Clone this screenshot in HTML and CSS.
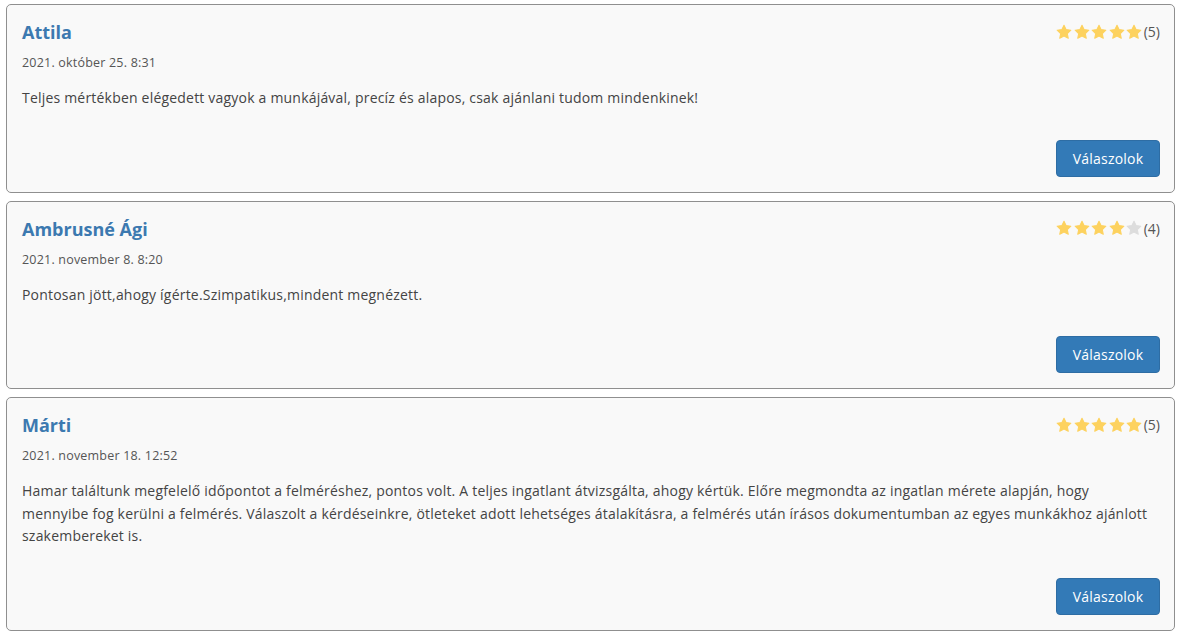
FILE: index.html
```html
<!DOCTYPE html>
<html lang="hu">
<head>
    <meta charset="UTF-8">
    <meta name="viewport" content="width=device-width, initial-scale=1.0">
    <title>Értékelések</title>
    <link rel="stylesheet" href="styles.css">
</head>
<body>
<svg width="0" height="0" class="defs">
    <defs>
        <symbol id="star" viewBox="0 0 24 24">
            <path d="M12 1.8l3.1 6.6 7.2.9-5.3 5 1.4 7.1L12 17.9l-6.4 3.5 1.4-7.1-5.3-5 7.2-.9z" stroke-linejoin="round" stroke-width="1.6"/>
        </symbol>
    </defs>
</svg>
<div class="reviews">
    <div class="review">
        <div class="review-head">
            <h3 class="review-name">Attila</h3>
            <div class="rating">
                <svg class="star on"><use href="#star"/></svg>
                <svg class="star on"><use href="#star"/></svg>
                <svg class="star on"><use href="#star"/></svg>
                <svg class="star on"><use href="#star"/></svg>
                <svg class="star on"><use href="#star"/></svg>
                <span class="count">(5)</span>
            </div>
        </div>
        <div class="review-date">2021. október 25. 8:31</div>
        <p class="review-text">Teljes mértékben elégedett vagyok a munkájával, precíz és alapos, csak ajánlani tudom mindenkinek!</p>
        <div class="review-actions">
            <button class="btn-reply">Válaszolok</button>
        </div>
    </div>

    <div class="review">
        <div class="review-head">
            <h3 class="review-name">Ambrusné Ági</h3>
            <div class="rating">
                <svg class="star on"><use href="#star"/></svg>
                <svg class="star on"><use href="#star"/></svg>
                <svg class="star on"><use href="#star"/></svg>
                <svg class="star on"><use href="#star"/></svg>
                <svg class="star"><use href="#star"/></svg>
                <span class="count">(4)</span>
            </div>
        </div>
        <div class="review-date">2021. november 8. 8:20</div>
        <p class="review-text">Pontosan jött,ahogy ígérte.Szimpatikus,mindent megnézett.</p>
        <div class="review-actions">
            <button class="btn-reply">Válaszolok</button>
        </div>
    </div>

    <div class="review">
        <div class="review-head">
            <h3 class="review-name">Márti</h3>
            <div class="rating">
                <svg class="star on"><use href="#star"/></svg>
                <svg class="star on"><use href="#star"/></svg>
                <svg class="star on"><use href="#star"/></svg>
                <svg class="star on"><use href="#star"/></svg>
                <svg class="star on"><use href="#star"/></svg>
                <span class="count">(5)</span>
            </div>
        </div>
        <div class="review-date">2021. november 18. 12:52</div>
        <p class="review-text">Hamar találtunk megfelelő időpontot a felméréshez, pontos volt. A teljes ingatlant átvizsgálta, ahogy kértük. Előre megmondta az ingatlan mérete alapján, hogy mennyibe fog kerülni a felmérés. Válaszolt a kérdéseinkre, ötleteket adott lehetséges átalakításra, a felmérés után írásos dokumentumban az egyes munkákhoz ajánlott szakembereket is.</p>
        <div class="review-actions">
            <button class="btn-reply">Válaszolok</button>
        </div>
    </div>
</div>
</body>
</html>
```

FILE: styles.css
```css
/* Global */
body {
    font-family: 'Open Sans', 'Noto Sans', sans-serif;
    margin: 0;
    padding: 4px 5px 0 6px;
    background-color: #fff;
    color: #444;
}

.defs {
    position: absolute;
}

.reviews {
    display: flex;
    flex-direction: column;
    gap: 8px;
}

/* Review card */
.review {
    background-color: #f9f9f9;
    border: 1px solid #8f8f8f;
    border-radius: 5px;
    padding: 15px 14px 15px 15px;
}

.review-head {
    display: flex;
    justify-content: space-between;
    align-items: flex-start;
}

.review-name {
    margin: 0;
    font-size: 18px;
    line-height: 24px;
    font-weight: 700;
    color: #3c79b0;
}

.rating {
    display: flex;
    align-items: center;
    gap: 1.5px;
    font-size: 14px;
    color: #555;
    padding-top: 2px;
}

.star {
    width: 16px;
    height: 16px;
    fill: #ddd;
    stroke: #ddd;
}

.star.on {
    fill: #fdd25f;
    stroke: #fdd25f;
}

.review-date {
    margin-top: 10px;
    font-size: 12.5px;
    letter-spacing: 0.2px;
    line-height: 18px;
    color: #555;
}

.review-text {
    margin: 15px 12px 0 0;
    font-size: 14px;
    letter-spacing: 0.2px;
    line-height: 22.5px;
    color: #444;
}

.review-actions {
    display: flex;
    justify-content: flex-end;
    margin-top: 30px;
}

.btn-reply {
    font-family: inherit;
    font-size: 14px;
    font-weight: 500;
    letter-spacing: 0.2px;
    color: #fff;
    background-color: #337ab7;
    border: 1px solid #2e6da4;
    border-radius: 4px;
    height: 37px;
    width: 104px;
    padding: 0;
    cursor: pointer;
}
```
